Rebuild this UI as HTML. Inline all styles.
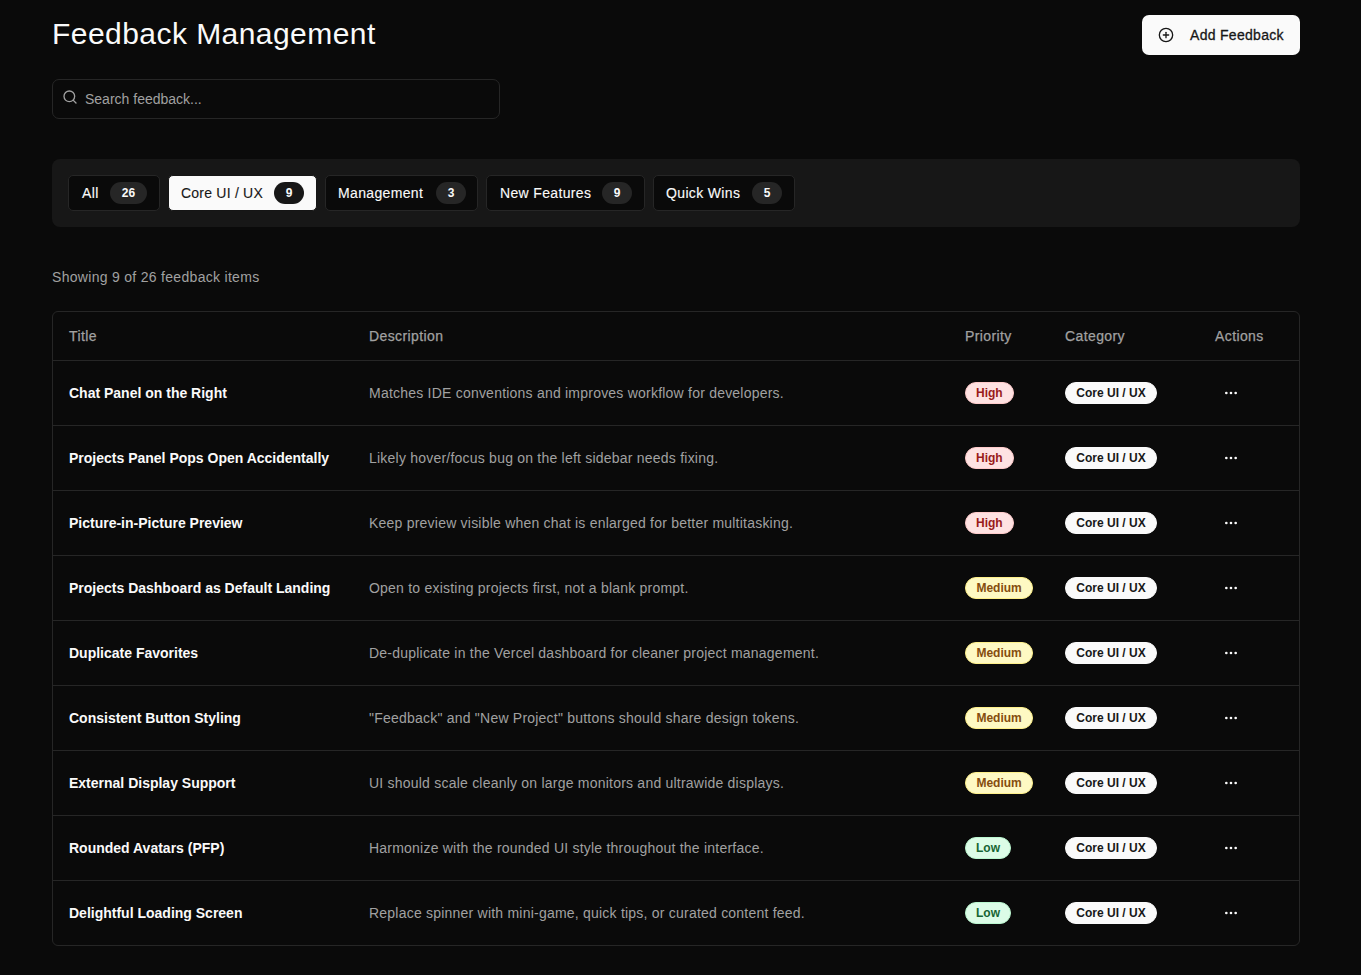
<!DOCTYPE html>
<html>
<head>
<meta charset="utf-8">
<style>
*{box-sizing:border-box;margin:0;padding:0}
html,body{width:1361px;height:975px;overflow:hidden;background:#0a0a0a;font-family:"Liberation Sans",sans-serif;color:#fafafa}
.abs{position:absolute}
h1{position:absolute;left:52px;top:16px;font-size:30px;font-weight:400;line-height:36px;letter-spacing:0.45px;white-space:nowrap;color:#fafafa}
.addbtn{position:absolute;left:1142px;top:15px;width:158px;height:40px;background:#fafafa;border-radius:7px;color:#171717;font-size:14px;font-weight:400}
.addbtn svg{position:absolute;left:16px;top:12px}
.addbtn span{position:absolute;left:48px;top:12px;line-height:16px;white-space:nowrap;letter-spacing:0.3px;-webkit-text-stroke:0.3px #171717}
.search{position:absolute;left:52px;top:79px;width:448px;height:40px;border:1px solid #262626;border-radius:7px}
.search svg{position:absolute;left:9px;top:9px}
.search span{position:absolute;left:32px;top:11px;line-height:16px;font-size:14px;color:#a1a1a1;white-space:nowrap}
.tabs{position:absolute;left:52px;top:159px;width:1248px;height:68px;background:#171717;border-radius:8px}
.tab{position:absolute;top:16px;height:36px;border:1px solid #262626;background:#0a0a0a;border-radius:5px;font-size:14px;color:#fafafa;white-space:nowrap}
.tab .lbl{position:absolute;left:12px;top:9px;line-height:16px;letter-spacing:0.35px;-webkit-text-stroke:0.12px currentColor}
.tab .cnt{position:absolute;top:6px;height:22px;border-radius:11px;background:#262626;font-size:12px;font-weight:700;line-height:22px;text-align:center;color:#fafafa}
.tab.active{background:#fafafa;border-color:#151515;color:#171717}
.tab.active .cnt{background:#171717;color:#fafafa}
.showing{position:absolute;left:52px;top:269px;font-size:14px;line-height:16px;color:#a1a1a1;white-space:nowrap;letter-spacing:0.3px}
.table{position:absolute;left:52px;top:311px;width:1248px;height:635px;border:1px solid #262626;border-radius:6px;overflow:hidden}
.row{position:relative;height:65px;border-top:1px solid #262626}
.hrow{position:relative;height:48px}
.c{position:absolute;top:0;height:100%;display:flex;align-items:center;white-space:nowrap}
.c1{left:16px}
.c2{left:316px}
.c3{left:912px}
.c4{left:1012px}
.c5{left:1162px}
.hrow .c{font-size:14px;color:#a1a1a1;font-weight:400;letter-spacing:0.4px;-webkit-text-stroke:0.25px #a1a1a1}
.t{font-size:14px;font-weight:700;color:#fafafa}
.d{font-size:14px;color:#a1a1a1;letter-spacing:0.22px}
.badge{display:inline-block;height:22px;line-height:20px;border-radius:11px;font-size:12px;font-weight:700;padding:0 10px;border:1px solid transparent}
.high{background:#fee2e2;color:#991b1b;border-color:#fecaca}
.med{background:#fef9c3;color:#854d0e;border-color:#fef08a;padding:0 10.4px}
.low{background:#dcfce7;color:#166534;border-color:#bbf7d0}
.cat{background:#fafafa;color:#171717;border-color:#fafafa;padding:0 10.3px}
.dots{position:absolute;left:1170px;top:24px}
</style>
</head>
<body>
<h1>Feedback Management</h1>
<div class="addbtn">
<svg width="16" height="16" viewBox="0 0 24 24" fill="none" stroke="#171717" stroke-width="2" stroke-linecap="round" stroke-linejoin="round"><circle cx="12" cy="12" r="10"/><path d="M8 12h8"/><path d="M12 8v8"/></svg>
<span>Add Feedback</span>
</div>
<div class="search">
<svg width="16" height="16" viewBox="0 0 24 24" fill="none" stroke="#a1a1a1" stroke-width="2" stroke-linecap="round" stroke-linejoin="round"><circle cx="11" cy="11" r="8"/><path d="m21 21-4.3-4.3"/></svg>
<span>Search feedback...</span>
</div>
<div class="tabs">
 <div class="tab" style="left:16px;width:92px"><span class="lbl" style="left:13px">All</span><span class="cnt" style="left:41px;width:37px">26</span></div>
 <div class="tab active" style="left:116px;width:149px"><span class="lbl" style="letter-spacing:0.22px">Core UI / UX</span><span class="cnt" style="left:105px;width:30px">9</span></div>
 <div class="tab" style="left:273px;width:153px"><span class="lbl">Management</span><span class="cnt" style="left:110px;width:30px">3</span></div>
 <div class="tab" style="left:434px;width:159px"><span class="lbl" style="left:13px">New Features</span><span class="cnt" style="left:115px;width:30px">9</span></div>
 <div class="tab" style="left:601px;width:142px"><span class="lbl">Quick Wins</span><span class="cnt" style="left:98px;width:30px">5</span></div>
</div>
<div class="showing">Showing 9 of 26 feedback items</div>
<div class="table">
 <div class="hrow"><div class="c c1">Title</div><div class="c c2">Description</div><div class="c c3">Priority</div><div class="c c4">Category</div><div class="c c5">Actions</div></div>
 <div class="row"><div class="c c1 t">Chat Panel on the Right</div><div class="c c2 d">Matches IDE conventions and improves workflow for developers.</div><div class="c c3"><span class="badge high">High</span></div><div class="c c4"><span class="badge cat">Core UI / UX</span></div><svg class="dots" width="16" height="16" viewBox="0 0 24 24" fill="none" stroke="#fafafa" stroke-width="2" stroke-linecap="round" stroke-linejoin="round"><circle cx="12" cy="12" r="1"/><circle cx="19" cy="12" r="1"/><circle cx="5" cy="12" r="1"/></svg></div>
 <div class="row"><div class="c c1 t">Projects Panel Pops Open Accidentally</div><div class="c c2 d">Likely hover/focus bug on the left sidebar needs fixing.</div><div class="c c3"><span class="badge high">High</span></div><div class="c c4"><span class="badge cat">Core UI / UX</span></div><svg class="dots" width="16" height="16" viewBox="0 0 24 24" fill="none" stroke="#fafafa" stroke-width="2" stroke-linecap="round" stroke-linejoin="round"><circle cx="12" cy="12" r="1"/><circle cx="19" cy="12" r="1"/><circle cx="5" cy="12" r="1"/></svg></div>
 <div class="row"><div class="c c1 t">Picture-in-Picture Preview</div><div class="c c2 d">Keep preview visible when chat is enlarged for better multitasking.</div><div class="c c3"><span class="badge high">High</span></div><div class="c c4"><span class="badge cat">Core UI / UX</span></div><svg class="dots" width="16" height="16" viewBox="0 0 24 24" fill="none" stroke="#fafafa" stroke-width="2" stroke-linecap="round" stroke-linejoin="round"><circle cx="12" cy="12" r="1"/><circle cx="19" cy="12" r="1"/><circle cx="5" cy="12" r="1"/></svg></div>
 <div class="row"><div class="c c1 t">Projects Dashboard as Default Landing</div><div class="c c2 d">Open to existing projects first, not a blank prompt.</div><div class="c c3"><span class="badge med">Medium</span></div><div class="c c4"><span class="badge cat">Core UI / UX</span></div><svg class="dots" width="16" height="16" viewBox="0 0 24 24" fill="none" stroke="#fafafa" stroke-width="2" stroke-linecap="round" stroke-linejoin="round"><circle cx="12" cy="12" r="1"/><circle cx="19" cy="12" r="1"/><circle cx="5" cy="12" r="1"/></svg></div>
 <div class="row"><div class="c c1 t">Duplicate Favorites</div><div class="c c2 d">De-duplicate in the Vercel dashboard for cleaner project management.</div><div class="c c3"><span class="badge med">Medium</span></div><div class="c c4"><span class="badge cat">Core UI / UX</span></div><svg class="dots" width="16" height="16" viewBox="0 0 24 24" fill="none" stroke="#fafafa" stroke-width="2" stroke-linecap="round" stroke-linejoin="round"><circle cx="12" cy="12" r="1"/><circle cx="19" cy="12" r="1"/><circle cx="5" cy="12" r="1"/></svg></div>
 <div class="row"><div class="c c1 t">Consistent Button Styling</div><div class="c c2 d">&quot;Feedback&quot; and &quot;New Project&quot; buttons should share design tokens.</div><div class="c c3"><span class="badge med">Medium</span></div><div class="c c4"><span class="badge cat">Core UI / UX</span></div><svg class="dots" width="16" height="16" viewBox="0 0 24 24" fill="none" stroke="#fafafa" stroke-width="2" stroke-linecap="round" stroke-linejoin="round"><circle cx="12" cy="12" r="1"/><circle cx="19" cy="12" r="1"/><circle cx="5" cy="12" r="1"/></svg></div>
 <div class="row"><div class="c c1 t">External Display Support</div><div class="c c2 d">UI should scale cleanly on large monitors and ultrawide displays.</div><div class="c c3"><span class="badge med">Medium</span></div><div class="c c4"><span class="badge cat">Core UI / UX</span></div><svg class="dots" width="16" height="16" viewBox="0 0 24 24" fill="none" stroke="#fafafa" stroke-width="2" stroke-linecap="round" stroke-linejoin="round"><circle cx="12" cy="12" r="1"/><circle cx="19" cy="12" r="1"/><circle cx="5" cy="12" r="1"/></svg></div>
 <div class="row"><div class="c c1 t">Rounded Avatars (PFP)</div><div class="c c2 d">Harmonize with the rounded UI style throughout the interface.</div><div class="c c3"><span class="badge low">Low</span></div><div class="c c4"><span class="badge cat">Core UI / UX</span></div><svg class="dots" width="16" height="16" viewBox="0 0 24 24" fill="none" stroke="#fafafa" stroke-width="2" stroke-linecap="round" stroke-linejoin="round"><circle cx="12" cy="12" r="1"/><circle cx="19" cy="12" r="1"/><circle cx="5" cy="12" r="1"/></svg></div>
 <div class="row"><div class="c c1 t">Delightful Loading Screen</div><div class="c c2 d">Replace spinner with mini-game, quick tips, or curated content feed.</div><div class="c c3"><span class="badge low">Low</span></div><div class="c c4"><span class="badge cat">Core UI / UX</span></div><svg class="dots" width="16" height="16" viewBox="0 0 24 24" fill="none" stroke="#fafafa" stroke-width="2" stroke-linecap="round" stroke-linejoin="round"><circle cx="12" cy="12" r="1"/><circle cx="19" cy="12" r="1"/><circle cx="5" cy="12" r="1"/></svg></div>
</div>
</body>
</html>
